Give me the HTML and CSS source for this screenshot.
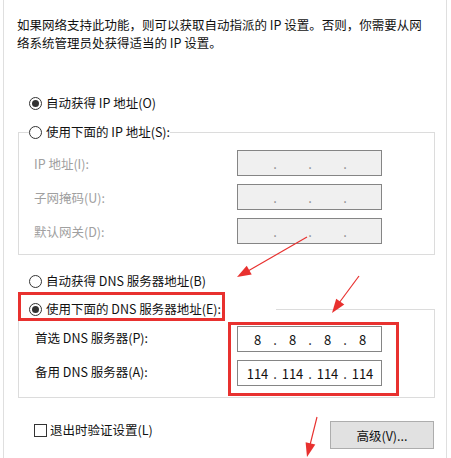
FILE: index.html
```html
<!DOCTYPE html>
<html lang="zh-CN">
<head>
    <meta charset="UTF-8">
    <meta name="viewport" content="width=device-width, initial-scale=1.0">
    <title>Internet 协议版本 4 (TCP/IPv4) 属性</title>
    <link rel="stylesheet" href="styles.css">
</head>
<body>
    <div class="window">
        <p class="intro">如果网络支持此功能，则可以获取自动指派的 IP 设置。否则，你需要从网<br>络系统管理员处获得适当的 IP 设置。</p>

        <label class="radio-row first">
            <span class="radio checked"></span>自动获得 IP 地址(O)
        </label>

        <fieldset class="group ip-group">
            <legend class="ip-title"><span class="radio"></span>使用下面的 IP 地址(S):</legend>
            <div class="group-body">
                <div class="field-row disabled">
                    <span class="field-label">IP 地址(I):</span>
                    <div class="ip-box off"><span class="seg"></span><span class="dot">.</span><span class="seg"></span><span class="dot">.</span><span class="seg"></span><span class="dot">.</span><span class="seg"></span></div>
                </div>
                <div class="field-row disabled">
                    <span class="field-label">子网掩码(U):</span>
                    <div class="ip-box off"><span class="seg"></span><span class="dot">.</span><span class="seg"></span><span class="dot">.</span><span class="seg"></span><span class="dot">.</span><span class="seg"></span></div>
                </div>
                <div class="field-row disabled">
                    <span class="field-label">默认网关(D):</span>
                    <div class="ip-box off"><span class="seg"></span><span class="dot">.</span><span class="seg"></span><span class="dot">.</span><span class="seg"></span><span class="dot">.</span><span class="seg"></span></div>
                </div>
            </div>
        </fieldset>

        <label class="radio-row dns-auto">
            <span class="radio"></span>自动获得 DNS 服务器地址(B)
        </label>

        <fieldset class="group dns-group">
            <legend class="dns-title"><span class="mark"><span class="radio checked"></span>使用下面的 DNS 服务器地址(E):</span></legend>
            <div class="dns-fields">
                <div class="dns-labels">
                    <span>首选 DNS 服务器(P):</span>
                    <span>备用 DNS 服务器(A):</span>
                </div>
                <div class="dns-inputs">
                    <div class="ip-box"><span class="seg">8</span><span class="dot">.</span><span class="seg">8</span><span class="dot">.</span><span class="seg">8</span><span class="dot">.</span><span class="seg">8</span></div>
                    <div class="ip-box"><span class="seg">114</span><span class="dot">.</span><span class="seg">114</span><span class="dot">.</span><span class="seg">114</span><span class="dot">.</span><span class="seg">114</span></div>
                </div>
            </div>
        </fieldset>

        <div class="footer">
            <label class="check-row"><span class="checkbox"></span>退出时验证设置(L)</label>
            <button class="advanced">高级(V)...</button>
        </div>
    </div>

    <!-- 标注箭头 -->
    <svg class="arrows" width="451" height="458" viewBox="0 0 451 458">
        <line x1="307" y1="237" x2="248" y2="271"/>
        <polygon points="237,277 246.7,265.8 251.7,274.5"/>
        <line x1="359" y1="276" x2="339" y2="303"/>
        <polygon points="332,313 336.2,298.8 344.3,304.6"/>
        <line x1="317" y1="417" x2="310" y2="445"/>
        <polygon points="307,457 305.6,442.2 315.3,444.6"/>
    </svg>
</body>
</html>
```

FILE: styles.css
```css
body {
    margin: 0;
    font-family: "Noto Sans CJK SC", "Noto Sans", sans-serif;
    font-size: 12.5px;
    color: #111;
    background-color: #fff;
    position: relative;
}
.window {
    margin-left: 3px;
    width: 444px;
    height: 458px;
    box-sizing: border-box;
    padding-top: 16px;
    border-left: 1px solid #dfdfdf;
    border-right: 1px solid #dfdfdf;
    overflow: hidden;
}
.intro {
    margin: 0;
    padding-left: 13px;
    line-height: 18px;
}
.radio-row {
    display: flex;
    align-items: center;
    gap: 4px;
    margin-left: 25px;
    line-height: 20px;
}
.radio-row.first {
    margin-top: 41px;
}
.radio-row.dns-auto {
    margin-top: 16px;
}
.radio {
    position: relative;
    flex: none;
    width: 13px;
    height: 13px;
    box-sizing: border-box;
    border: 1px solid #333;
    border-radius: 50%;
    background-color: #fff;
}
.radio.checked::after {
    content: '';
    position: absolute;
    inset: 2px;
    border-radius: 50%;
    background-color: #333;
}
.group {
    margin: 9px 0 0 14px;
    padding: 0;
    width: 417px;
    box-sizing: border-box;
    border: 1px solid #dcdcdc;
    min-inline-size: 0;
}
.ip-title {
    display: flex;
    align-items: center;
    gap: 4px;
    margin-left: 10px;
    padding: 0;
    line-height: 20px;
}
.group-body {
    padding: 8px 0 10px 15px;
}
.field-row {
    display: flex;
    align-items: center;
    height: 26px;
    margin-bottom: 8px;
}
.field-row:last-child {
    margin-bottom: 0;
}
.field-label {
    width: 203px;
}
.disabled .field-label {
    color: #a0a0a0;
}
.ip-box {
    display: flex;
    align-items: center;
    width: 145px;
    height: 26px;
    box-sizing: border-box;
    padding-left: 6px;
    border: 1px solid #858585;
    background-color: #fff;
    font-size: 13px;
}
.ip-box.off {
    background-color: #f0f0f0;
    color: #8a8a8a;
}
.seg {
    width: 27px;
    text-align: center;
}
.dot {
    width: 8px;
    text-align: center;
}
.dns-group {
    margin-top: 4px;
}
.dns-title {
    display: flex;
    width: 255px;
    margin-left: 2px;
    padding: 0 0 6px 0;
}
.mark {
    display: flex;
    align-items: center;
    gap: 4px;
    padding: 5px 1px 0 8px;
    line-height: 18px;
    outline: 3px solid #e8312f;
}
.dns-fields {
    display: flex;
    padding: 2px 0 11px 16px;
}
.dns-labels {
    display: flex;
    flex-direction: column;
    gap: 8px;
    width: 202px;
}
.dns-labels span {
    height: 26px;
    line-height: 24px;
}
.dns-inputs {
    position: relative;
    display: flex;
    flex-direction: column;
    gap: 8px;
}
.dns-inputs::after {
    content: '';
    position: absolute;
    left: -9px;
    right: -17px;
    top: -4px;
    bottom: -10px;
    border: 3px solid #e8312f;
}
.footer {
    display: flex;
    justify-content: space-between;
    align-items: flex-start;
    margin-top: 23px;
    padding: 0 12px 0 30px;
}
.check-row {
    display: flex;
    align-items: center;
    gap: 3px;
    line-height: 18px;
}
.checkbox {
    width: 13px;
    height: 13px;
    box-sizing: border-box;
    border: 1px solid #333;
    background-color: #fff;
}
.advanced {
    width: 104px;
    height: 28px;
    padding: 0;
    border: 1px solid #adadad;
    background-color: #e1e1e1;
    font-family: inherit;
    font-size: 12.5px;
    color: #111;
}
.arrows {
    position: absolute;
    left: 0;
    top: 0;
    pointer-events: none;
}
.arrows line {
    stroke: #e8312f;
    stroke-width: 1.2;
}
.arrows polygon {
    fill: #e8312f;
}
```
